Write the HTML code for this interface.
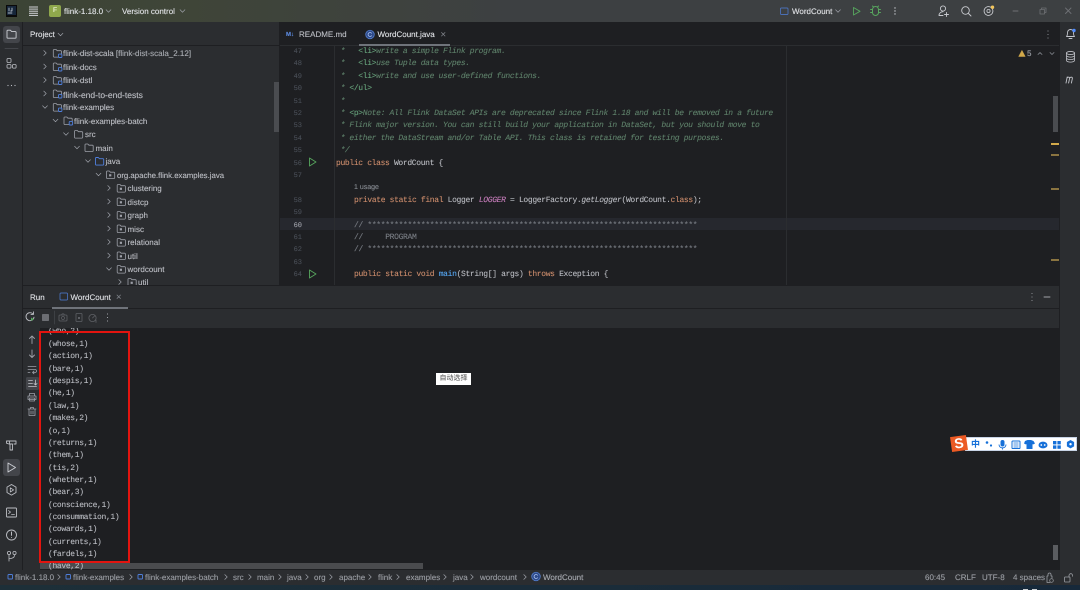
<!DOCTYPE html>
<html>
<head>
<meta charset="utf-8">
<style>
html,body{margin:0;padding:0;background:#1e1f22;}
#r{position:relative;width:1080px;height:590px;overflow:hidden;background:#1e1f22;filter:blur(.3px);text-rendering:geometricPrecision;}
.b{position:absolute;}
.u,.c,.k{position:absolute;white-space:pre;height:12px;line-height:12px;margin-top:1px;}
.u{font:8px/12px "Liberation Sans",sans-serif;color:#bcbec4;-webkit-text-stroke:.12px;}
.c{font:8px/12px "Liberation Mono",monospace;letter-spacing:-.343px;color:#bcbec4;-webkit-text-stroke:.08px;}
.m{color:#5f826b;font-style:italic;}
.g{color:#67a37c;font-style:normal;}
.w{color:#cf8e6d;}
.d{color:#7a7e85;}
.n{left:280px;width:22px;text-align:right;color:#4b5059;font-size:7px;letter-spacing:0;}
.s{color:#a8abb1;}
svg{position:absolute;left:0;top:0;}
</style>
</head>
<body>
<div id="r">
<!-- backgrounds -->
<div class="b" style="left:0;top:0;width:1080px;height:22px;background:linear-gradient(90deg,#3c4435 0,#3f4538 180px,#3d4042 520px,#3d4042 100%);"></div>
<div class="b" style="left:0;top:22px;width:23px;height:548px;background:#2b2d30;border-right:1px solid #1e1f22;box-sizing:border-box;"></div>
<div class="b" style="left:23px;top:22px;width:256px;height:264px;background:#2b2d30;overflow:hidden;"></div>
<div class="b" style="left:23px;top:45px;width:256px;height:1px;background:#1e1f22;"></div>
<div class="b" style="left:279px;top:22px;width:1px;height:264px;background:#1e1f22;"></div>
<div class="b" style="left:280px;top:45px;width:779px;height:1px;background:#2b2d30;"></div>
<div class="b" style="left:1059px;top:22px;width:21px;height:548px;background:#2b2d30;border-left:1px solid #1e1f22;box-sizing:border-box;"></div>
<div class="b" style="left:280px;top:218px;width:779px;height:12.4px;background:#26282e;"></div>
<div class="b" style="left:334px;top:46px;width:1px;height:240px;background:#2b2d30;"></div>
<div class="b" style="left:786px;top:46px;width:1px;height:240px;background:#2b2d30;"></div>
<div class="b" style="left:359px;top:44px;width:91px;height:2px;background:#6f737a;"></div>
<div class="b" style="left:274px;top:82px;width:5px;height:50px;background:#4a4c50;"></div>
<div class="b" style="left:1053px;top:96px;width:5px;height:36px;background:#4a4c50;"></div>
<div class="b" style="left:1051px;top:143px;width:8px;height:1.5px;background:#d2a94a;"></div>
<div class="b" style="left:1051px;top:154px;width:8px;height:2px;background:#8a7440;"></div>
<div class="b" style="left:1051px;top:188px;width:8px;height:2px;background:#8a7440;"></div>
<div class="b" style="left:1051px;top:259px;width:8px;height:2px;background:#8a7440;"></div>

<!-- top bar text -->
<div class="u" style="left:64px;top:4.5px;color:#dfe1e5;">flink-1.18.0</div>
<div class="u" style="left:122px;top:4.5px;color:#dfe1e5;">Version control</div>
<div class="u" style="left:792px;top:4.5px;color:#dfe1e5;">WordCount</div>
<div class="b" style="left:49px;top:5px;width:12px;height:12px;border-radius:2px;background:#8fa84c;color:#dfe8c4;font:bold 7px/12px 'Liberation Sans',sans-serif;text-align:center;">F</div>

<!-- project -->
<div class="u" style="left:30px;top:28px;color:#dfe1e5;">Project</div>
<div class="u" style="left:63px;top:47px;">flink-dist-scala <span class="s">[flink-dist-scala_2.12]</span></div>
<div class="u" style="left:63px;top:60.5px;">flink-docs</div>
<div class="u" style="left:63px;top:74px;">flink-dstl</div>
<div class="u" style="left:63px;top:87.5px;font-size:8.5px;">flink-end-to-end-tests</div>
<div class="u" style="left:63px;top:101px;">flink-examples</div>
<div class="u" style="left:74px;top:114.5px;">flink-examples-batch</div>
<div class="u" style="left:85px;top:128px;">src</div>
<div class="u" style="left:95.5px;top:141.5px;">main</div>
<div class="u" style="left:105.5px;top:155px;">java</div>
<div class="u" style="left:117px;top:168.5px;font-size:7.8px;">org.apache.flink.examples.java</div>
<div class="u" style="left:127.5px;top:182px;">clustering</div>
<div class="u" style="left:127.5px;top:195.5px;">distcp</div>
<div class="u" style="left:127.5px;top:209px;">graph</div>
<div class="u" style="left:127.5px;top:222.5px;">misc</div>
<div class="u" style="left:127.5px;top:236px;">relational</div>
<div class="u" style="left:127.5px;top:249.5px;">util</div>
<div class="u" style="left:127.5px;top:263px;">wordcount</div>
<div class="u" style="left:138px;top:276px;height:9px;overflow:hidden;">util</div>

<!-- editor tabs -->
<div class="u" style="left:286px;top:28px;color:#5a86d8;font-size:6px;font-weight:bold;">M↓</div>
<div class="u" style="left:299px;top:28px;">README.md</div>
<div class="u" style="left:377.5px;top:28px;color:#dfe1e5;">WordCount.java</div>
<div class="u" style="left:1027px;top:47px;color:#9da0a8;">5</div>

<!-- code -->
<div class="c n" style="top:45px;">47</div>
<div class="c m" style="left:336px;top:45px;"> *   <span class="g">&lt;li&gt;</span>write a simple Flink program.</div>
<div class="c n" style="top:57.4px;">48</div>
<div class="c m" style="left:336px;top:57.4px;"> *   <span class="g">&lt;li&gt;</span>use Tuple data types.</div>
<div class="c n" style="top:69.8px;">49</div>
<div class="c m" style="left:336px;top:69.8px;"> *   <span class="g">&lt;li&gt;</span>write and use user-defined functions.</div>
<div class="c n" style="top:82.2px;">50</div>
<div class="c m" style="left:336px;top:82.2px;"> * <span class="g">&lt;/ul&gt;</span></div>
<div class="c n" style="top:94.6px;">51</div>
<div class="c m" style="left:336px;top:94.6px;"> *</div>
<div class="c n" style="top:107px;">52</div>
<div class="c m" style="left:336px;top:107px;"> * <span class="g">&lt;p&gt;</span>Note: All Flink DataSet APIs are deprecated since Flink 1.18 and will be removed in a future</div>
<div class="c n" style="top:119.4px;">53</div>
<div class="c m" style="left:336px;top:119.4px;"> * Flink major version. You can still build your application in DataSet, but you should move to</div>
<div class="c n" style="top:131.8px;">54</div>
<div class="c m" style="left:336px;top:131.8px;"> * either the DataStream and/or Table API. This class is retained for testing purposes.</div>
<div class="c n" style="top:144.2px;">55</div>
<div class="c m" style="left:336px;top:144.2px;"> */</div>
<div class="c n" style="top:156.6px;">56</div>
<div class="c" style="left:336px;top:156.6px;"><span class="w">public class</span> WordCount {</div>
<div class="c n" style="top:169px;">57</div>
<div class="u" style="left:354px;top:181px;font-size:7px;color:#868a91;">1 usage</div>
<div class="c n" style="top:193.8px;">58</div>
<div class="c" style="left:354px;top:193.8px;"><span class="w">private static final</span> Logger <span style="color:#c77dbb;font-style:italic;">LOGGER</span> = LoggerFactory.<i>getLogger</i>(WordCount.<span class="w">class</span>);</div>
<div class="c n" style="top:206.2px;">59</div>
<div class="c n" style="top:218.6px;color:#a1a3ab;">60</div>
<div class="c d" style="left:354px;top:218.6px;">// **************************************************************************</div>
<div class="c n" style="top:231px;">61</div>
<div class="c d" style="left:354px;top:231px;">//     PROGRAM</div>
<div class="c n" style="top:243.4px;">62</div>
<div class="c d" style="left:354px;top:243.4px;">// **************************************************************************</div>
<div class="c n" style="top:255.8px;">63</div>
<div class="c n" style="top:268.2px;">64</div>
<div class="c" style="left:354px;top:268.2px;"><span class="w">public static void</span> <span style="color:#56a8f5;">main</span>(String[] args) <span class="w">throws</span> Exception {</div>

<!-- run panel -->
<div class="b" style="left:23px;top:285px;width:1036px;height:43px;background:#2b2d30;border-top:1px solid #1e1f22;box-sizing:border-box;"></div>
<div class="b" style="left:23px;top:328px;width:17px;height:242px;background:#2b2d30;"></div>
<div class="b" style="left:23px;top:308px;width:1036px;height:1px;background:#1e1f22;"></div>
<div class="b" style="left:52px;top:307px;width:76px;height:2px;background:#6f737a;"></div>
<div class="u" style="left:30px;top:291px;color:#dfe1e5;">Run</div>
<div class="u" style="left:70.5px;top:291px;color:#dfe1e5;">WordCount</div>

<!-- console -->
<div class="b" style="left:40px;top:563px;width:383px;height:6px;background:#4a4b4e;"></div>
<div class="b" style="left:40px;top:328px;width:1019px;height:242px;overflow:hidden;">
<div class="c" style="left:8px;top:-3px;">(who,2)</div>
<div class="c" style="left:8px;top:10px;">(whose,1)</div>
<div class="c" style="left:8px;top:22.4px;">(action,1)</div>
<div class="c" style="left:8px;top:34.7px;">(bare,1)</div>
<div class="c" style="left:8px;top:47.1px;">(despis,1)</div>
<div class="c" style="left:8px;top:59.4px;">(he,1)</div>
<div class="c" style="left:8px;top:71.8px;">(law,1)</div>
<div class="c" style="left:8px;top:84.1px;">(makes,2)</div>
<div class="c" style="left:8px;top:96.5px;">(o,1)</div>
<div class="c" style="left:8px;top:108.8px;">(returns,1)</div>
<div class="c" style="left:8px;top:121.2px;">(them,1)</div>
<div class="c" style="left:8px;top:133.5px;">(tis,2)</div>
<div class="c" style="left:8px;top:145.9px;">(whether,1)</div>
<div class="c" style="left:8px;top:158.2px;">(bear,3)</div>
<div class="c" style="left:8px;top:170.6px;">(conscience,1)</div>
<div class="c" style="left:8px;top:182.9px;">(consummation,1)</div>
<div class="c" style="left:8px;top:195.3px;">(cowards,1)</div>
<div class="c" style="left:8px;top:207.6px;">(currents,1)</div>
<div class="c" style="left:8px;top:220px;">(fardels,1)</div>
<div class="c" style="left:8px;top:232.3px;">(have,2)</div>
</div>
<div class="b" style="left:1053px;top:545px;width:5px;height:15px;background:#5a5c60;"></div>
<div class="b" style="left:39px;top:331px;width:91px;height:232px;border:2px solid #e3140f;box-sizing:border-box;"></div>

<!-- status -->
<div class="b" style="left:0;top:570px;width:1080px;height:15px;background:#2b2d30;"></div>
<div class="b" style="left:0;top:585px;width:1080px;height:5px;background:linear-gradient(90deg,#1d2f38,#17293a);"></div>
<div class="b" style="left:1023px;top:588.5px;width:5px;height:1.5px;background:#c8ccd0;"></div>
<div class="b" style="left:1032px;top:588.5px;width:5px;height:1.5px;background:#c8ccd0;"></div>
<div class="u" style="left:15px;top:570.5px;color:#9a9da3;">flink-1.18.0</div>
<div class="u" style="left:73px;top:570.5px;color:#9a9da3;">flink-examples</div>
<div class="u" style="left:145px;top:570.5px;color:#9a9da3;">flink-examples-batch</div>
<div class="u" style="left:233px;top:570.5px;color:#9a9da3;">src</div>
<div class="u" style="left:257px;top:570.5px;color:#9a9da3;">main</div>
<div class="u" style="left:287px;top:570.5px;color:#9a9da3;">java</div>
<div class="u" style="left:314px;top:570.5px;color:#9a9da3;">org</div>
<div class="u" style="left:339px;top:570.5px;color:#9a9da3;">apache</div>
<div class="u" style="left:378px;top:570.5px;color:#9a9da3;">flink</div>
<div class="u" style="left:406px;top:570.5px;color:#9a9da3;">examples</div>
<div class="u" style="left:453px;top:570.5px;color:#9a9da3;">java</div>
<div class="u" style="left:480px;top:570.5px;color:#9a9da3;">wordcount</div>
<div class="u" style="left:543px;top:570.5px;color:#a8abb1;">WordCount</div>
<div class="u" style="left:925px;top:570.5px;color:#9a9da3;">60:45</div>
<div class="u" style="left:955px;top:570.5px;color:#9a9da3;">CRLF</div>
<div class="u" style="left:982px;top:570.5px;color:#9a9da3;">UTF-8</div>
<div class="u" style="left:1013px;top:570.5px;color:#9a9da3;">4 spaces</div>

<!-- icons -->
<svg width="1080" height="590" viewBox="0 0 1080 590" fill="none" stroke-linecap="round" stroke-linejoin="round">
<defs>
<path id="cr" d="M-1.2-2.4 1.2 0-1.2 2.4" stroke="#9da0a8" stroke-width=".7"/>
<path id="cd" d="M-2.4-1.2 0 1.2 2.4-1.2" stroke="#9da0a8" stroke-width=".7"/>
<path id="fo" d="M0-3a.8.8 0 0 1 .8-.8h2l1.1 1.2h3.5a.8.8 0 0 1 .8.8v4.8a.8.8 0 0 1-.8.8H.8a.8.8 0 0 1-.8-.8z" stroke="#9da0a8" stroke-width=".8"/>
<g id="mo"><use href="#fo"/><rect x="5.2" y="0.8" width="3.4" height="3.4" rx=".6" fill="#2b2d30" stroke="#4f7fdc" stroke-width=".9"/></g>
<g id="pk"><use href="#fo"/><rect x="2.6" y="-.6" width="2.2" height="2.2" fill="#9da0a8"/></g>
<g id="cc"><circle r="4.3" fill="#2d4a8a" stroke="#5a86d8" stroke-width=".7"/><path d="M1.6-1.3A2 2 0 1 0 1.6 1.3" stroke="#a8c0f0" stroke-width=".8"/></g>
</defs>

<!-- title bar -->
<rect x="6" y="5" width="11" height="12" fill="#0a0a0a"/><rect x="7" y="6" width="9" height="9" fill="#16263a"/>
<path d="M9 8v3M12 8v3h-1.4M8 13h4" stroke="#dfe6ee" stroke-width=".7"/>
<g fill="#cfd1d5"><rect x="29" y="6.5" width="9" height="1"/><rect x="29" y="8.6" width="9" height="1"/><rect x="29" y="10.7" width="9" height="1"/><rect x="29" y="12.8" width="9" height="1"/><rect x="29" y="14.9" width="9" height="1"/></g>
<use href="#cd" x="108.5" y="11"/><use href="#cd" x="182.5" y="11"/>
<rect x="780.5" y="8" width="7.5" height="6.5" rx=".8" stroke="#4f7fdc" stroke-width=".7"/>
<use href="#cd" x="838" y="11"/>
<path d="M853.5 7.5v7.5l6.5-3.7z" stroke="#57a65e" stroke-width=".9"/>
<path d="M872.5 9.5a3 3 0 0 1 6 0v3a3 3 0 0 1-6 0zM870.5 9.5h2M878.5 9.5h2M870.5 12.5h2M878.5 12.5h2M873.5 7l-1-1M877.5 7l1-1" stroke="#57a65e" stroke-width="1"/>
<path d="M895 8v0M895 11v0M895 14v0" stroke="#c8cacf" stroke-width="1.4"/>
<circle cx="943" cy="8.5" r="2.6" stroke="#c8cacf" stroke-width=".9"/>
<path d="M939 15.5c0-2.5 2-3.8 4-3.8M946.5 12.5v4M944.5 14.5h4M939 15.5h4" stroke="#c8cacf" stroke-width=".9"/>
<circle cx="965.5" cy="10.5" r="3.8" stroke="#c8cacf" stroke-width=".9"/><path d="M968.5 13.5l2.5 2.5" stroke="#c8cacf" stroke-width=".9"/>
<circle cx="988.5" cy="11" r="4.4" stroke="#c8cacf" stroke-width=".9" stroke-dasharray="2.2 .6"/><circle cx="988.5" cy="11" r="1.6" stroke="#c8cacf" stroke-width=".8"/>
<circle cx="992.5" cy="7.2" r="1.7" fill="#f2c55c"/>
<path d="M1013 11h5" stroke="#6e7074" stroke-width=".9"/>
<path d="M1040 9.5h4.5v4.5H1040zM1041.5 9.5V8h4.5v4.5h-1.5" stroke="#6e7074" stroke-width=".8"/>
<path d="M1065.5 8l5.5 5.5M1071 8l-5.5 5.5" stroke="#6e7074" stroke-width=".9"/>

<!-- left stripe -->
<rect x="3" y="26" width="17" height="17" rx="3" fill="#43454a"/>
<path d="M7 31a.8.8 0 0 1 .8-.8h2.6l1.3 1.4h3.6a.8.8 0 0 1 .8.8v5a.8.8 0 0 1-.8.8H7.8a.8.8 0 0 1-.8-.8z" stroke="#ced0d6" stroke-width=".9"/>
<path d="M5 48.5h13" stroke="#43454a" stroke-width=".9"/>
<rect x="7" y="58.5" width="4" height="4" rx="1" stroke="#bcbec4" stroke-width=".8"/>
<rect x="7" y="64.5" width="4" height="3.6" rx="1" stroke="#bcbec4" stroke-width=".8"/>
<rect x="12.5" y="64.5" width="3.6" height="3.6" rx="1" stroke="#bcbec4" stroke-width=".8"/>
<path d="M8 85.5v0M11.5 85.5v0M15 85.5v0" stroke="#bcbec4" stroke-width="1.2"/>
<path d="M6.5 441h9.5v3h-2M6.5 441v2.2l2.5 .8M9.5 441v3M10 444h2.5v6H10z" stroke="#bcbec4" stroke-width=".9"/>
<rect x="3" y="459" width="17" height="17" rx="3" fill="#43454a"/>
<path d="M8 463v9l7.5-4.5z" stroke="#ced0d6" stroke-width=".9"/>
<path d="M11.5 484.5l4.5 2.6v5.4l-4.5 2.6-4.5-2.6v-5.4z" stroke="#bcbec4" stroke-width=".9"/><path d="M10.3 487.8v4.2l3.3-2.1z" stroke="#bcbec4" stroke-width=".8"/>
<rect x="6.5" y="508" width="10" height="9" rx=".8" stroke="#bcbec4" stroke-width=".9"/><path d="M8.5 510.5l2 1.6-2 1.6M11.5 514.5h3" stroke="#bcbec4" stroke-width=".8"/>
<circle cx="11.5" cy="535" r="5" stroke="#bcbec4" stroke-width=".9"/><path d="M11.5 532v3.4M11.5 537.5v0" stroke="#bcbec4" stroke-width="1"/>
<circle cx="9" cy="553" r="1.6" stroke="#bcbec4" stroke-width=".8"/><circle cx="14.5" cy="553" r="1.6" stroke="#bcbec4" stroke-width=".8"/>
<path d="M9 554.6v6.5M9 558.5c3.5 0 5.5-.8 5.5-3.3" stroke="#bcbec4" stroke-width=".8"/>

<!-- project header + tree -->
<use href="#cd" x="60.5" y="34.5"/>
<use href="#cr" x="45" y="53"/><use href="#mo" x="53.3" y="53.3"/>
<use href="#cr" x="45" y="66.5"/><use href="#mo" x="53.3" y="66.8"/>
<use href="#cr" x="45" y="80"/><use href="#mo" x="53.3" y="80.3"/>
<use href="#cr" x="45" y="93.5"/><use href="#mo" x="53.3" y="93.8"/>
<use href="#cd" x="45" y="107"/><use href="#mo" x="53.3" y="107.3"/>
<use href="#cd" x="55.5" y="120.5"/><use href="#mo" x="64" y="120.8"/>
<use href="#cd" x="66" y="134"/><use href="#fo" x="74.5" y="134.3"/>
<use href="#cd" x="77" y="147.5"/><use href="#fo" x="85" y="147.8"/>
<use href="#cd" x="88" y="161"/><path d="M95.5 158.3a.8.8 0 0 1 .8-.8h2l1.1 1.2h3.5a.8.8 0 0 1 .8.8v4.8a.8.8 0 0 1-.8.8h-6.6a.8.8 0 0 1-.8-.8z" stroke="#4f7fdc" stroke-width=".9"/>
<use href="#cd" x="98.5" y="174.5"/><use href="#pk" x="106.5" y="174.8"/>
<use href="#cr" x="109" y="188"/><use href="#pk" x="117.2" y="188.3"/>
<use href="#cr" x="109" y="201.5"/><use href="#pk" x="117.2" y="201.8"/>
<use href="#cr" x="109" y="215"/><use href="#pk" x="117.2" y="215.3"/>
<use href="#cr" x="109" y="228.5"/><use href="#pk" x="117.2" y="228.8"/>
<use href="#cr" x="109" y="242"/><use href="#pk" x="117.2" y="242.3"/>
<use href="#cr" x="109" y="255.5"/><use href="#pk" x="117.2" y="255.8"/>
<use href="#cd" x="109" y="269"/><use href="#pk" x="117.2" y="269.3"/>
<use href="#cr" x="120" y="282"/><use href="#pk" x="128" y="282.3"/>
<rect x="23" y="285" width="256" height="1" fill="#1e1f22"/>
<rect x="23" y="286" width="256" height="2" fill="#2b2d30"/>

<!-- editor tab icons and gutter -->
<use href="#cc" x="370" y="34.5"/>
<path d="M441.5 32.5l3.5 3.5M445 32.5l-3.5 3.5" stroke="#868a91" stroke-width=".7"/>
<path d="M1048 31v0M1048 34.5v0M1048 38v0" stroke="#a0a2a8" stroke-width="1.1"/>
<path d="M309.5 158v8l6.5-4z" stroke="#57a65e" stroke-width=".9"/>
<path d="M309.5 270v8l6.5-4z" stroke="#57a65e" stroke-width=".9"/>
<path d="M1022 50.5l3.2 6h-6.4z" fill="#d2a94a" stroke="#d2a94a" stroke-width=".5"/>
<path d="M1038 54.5l2-2 2 2M1050 52.5l2 2 2-2" stroke="#868a91" stroke-width=".8"/>

<!-- right stripe -->
<path d="M1066.5 36.5c1-1 1-2 1-4a3 3 0 0 1 6 0c0 2 0 3 1 4zM1069 38.5h3" stroke="#c2c4ca" stroke-width=".9"/><circle cx="1074" cy="30.5" r="1.7" fill="#4f8bff"/>
<ellipse cx="1070.5" cy="53" rx="4" ry="1.6" stroke="#c2c4ca" stroke-width=".9"/>
<path d="M1066.5 53v7.5c0 .9 1.8 1.6 4 1.6s4-.7 4-1.6V53M1066.5 55.5c0 .9 1.8 1.6 4 1.6s4-.7 4-1.6M1066.5 58c0 .9 1.8 1.6 4 1.6s4-.7 4-1.6" stroke="#c2c4ca" stroke-width=".8"/>
<path d="M1066 83l1.2-6M1067 78c1-1.2 2.7-1.2 2.6.3l-1 4.7M1069.8 78c1-1.2 2.7-1.2 2.6.3l-1 4.7" stroke="#c2c4ca" stroke-width=".9"/>

<!-- run panel icons -->
<rect x="60" y="293" width="7.5" height="7" rx=".9" stroke="#4f7fdc" stroke-width=".7"/>
<path d="M117 295l3.5 3.5M120.5 295l-3.5 3.5" stroke="#868a91" stroke-width=".7"/>
<path d="M1032 293.5v0M1032 297v0M1032 300.5v0" stroke="#a0a2a8" stroke-width="1.1"/>
<path d="M1044 297h6" stroke="#a0a2a8" stroke-width=".9"/>
<path d="M33 314a4 4 0 1 0 1 3.2M33.5 311.8v2.6H31" stroke="#bcbec4" stroke-width=".9"/><path d="M31 317.5v3.5l3-1.8z" fill="#57a65e"/>
<rect x="42" y="314" width="7" height="7" rx=".8" fill="#6c6e73"/>
<path d="M54.5 311v13" stroke="#43454a" stroke-width=".8"/>
<rect x="59" y="315" width="8" height="6" rx="1" stroke="#5e6065" stroke-width=".8"/><circle cx="63" cy="318" r="1.5" stroke="#5e6065" stroke-width=".7"/><path d="M61.5 315l.7-1.2h1.6l.7 1.2" stroke="#5e6065" stroke-width=".7"/>
<rect x="76" y="313.5" width="6" height="8" rx=".6" stroke="#5e6065" stroke-width=".8"/><rect x="78" y="317" width="2" height="2" fill="#5e6065"/>
<circle cx="92.5" cy="318" r="3.6" stroke="#5e6065" stroke-width=".8"/><path d="M92.5 318l2-2M96 320v2.5" stroke="#5e6065" stroke-width=".8"/>
<path d="M107.5 314v0M107.5 317.5v0M107.5 321v0" stroke="#bcbec4" stroke-width="1.1"/>
<path d="M32 336v7.5M29.5 338.5l2.5-2.5 2.5 2.5" stroke="#9da0a8" stroke-width=".9"/>
<path d="M32 350v7.5M29.5 355l2.5 2.5 2.5-2.5" stroke="#9da0a8" stroke-width=".9"/>
<path d="M28 366.5h8M28 369.5h7a1.5 1.5 0 0 1 0 3h-2M28 372.5h2M34 371l-1.5 1.5 1.5 1.3" stroke="#9da0a8" stroke-width=".8"/>
<rect x="26" y="377" width="13" height="13" rx="1.5" fill="#43454a"/>
<path d="M28.5 380.5h4M28.5 383.5h4M28.5 386.5h8M35.5 380v4.5M34 383.5l1.5 1.5 1.5-1.5" stroke="#c2c4ca" stroke-width=".8"/>
<path d="M29.5 396v-2.5h5V396M28 396h8v3.5h-8zM29.5 398h5v3h-5z" stroke="#9da0a8" stroke-width=".8"/>
<path d="M28 409h8M30.5 409v-1.5h3v1.5M29 409v6.5h6V409M31 411v3M33 411v3" stroke="#9da0a8" stroke-width=".8"/>

<!-- status icons -->
<rect x="8" y="574.5" width="4.5" height="4.5" rx=".8" stroke="#4f7fdc" stroke-width=".9"/>
<rect x="66" y="574.5" width="4.5" height="4.5" rx=".8" stroke="#4f7fdc" stroke-width=".9"/>
<rect x="138" y="574.5" width="4.5" height="4.5" rx=".8" stroke="#4f7fdc" stroke-width=".9"/>
<use href="#cr" x="59" y="577"/><use href="#cr" x="131" y="577"/><use href="#cr" x="226" y="577"/>
<use href="#cr" x="250" y="577"/><use href="#cr" x="280" y="577"/><use href="#cr" x="307" y="577"/>
<use href="#cr" x="331" y="577"/><use href="#cr" x="370" y="577"/><use href="#cr" x="398" y="577"/>
<use href="#cr" x="445" y="577"/><use href="#cr" x="472" y="577"/><use href="#cr" x="525" y="577"/>
<use href="#cc" x="536" y="576.5"/>
<path d="M1047 582.5v-6.5h1v-1.5a1.5 1.5 0 0 1 3 0v1.5h1v2M1047 582.5h3" stroke="#9a9da3" stroke-width=".8"/><circle cx="1051.5" cy="580.5" r="1.8" stroke="#9a9da3" stroke-width=".7"/>
<rect x="1064.5" y="577" width="5.5" height="5" rx=".6" stroke="#9a9da3" stroke-width=".8"/><path d="M1069 577v-1.5a1.8 1.8 0 0 1 3.6 0v.8" stroke="#9a9da3" stroke-width=".8"/>
</svg>

<!-- popup -->
<div class="b" style="left:436px;top:373px;width:35px;height:12px;background:#fff;color:#444;font:7px/12px 'Liberation Sans','Noto Sans CJK SC',sans-serif;text-align:center;">自动选择</div>

<!-- sogou bar -->
<div class="b" style="left:965px;top:437px;width:112px;height:14px;background:#fff;border:1px solid #c8d4e6;box-sizing:border-box;"></div>
<div class="b" style="left:951px;top:436px;width:16px;height:15px;background:#ec5a24;transform:rotate(-8deg);color:#fff;font:bold 14px/15px 'Liberation Sans',sans-serif;text-align:center;">S</div>
<div class="b" style="left:971px;top:439px;width:10px;height:10px;color:#1670d8;font:bold 9px/10px 'Noto Sans CJK SC',sans-serif;">中</div>
<svg width="1080" height="590" viewBox="0 0 1080 590">
<circle cx="987" cy="442.5" r="1.3" fill="#1670d8"/><circle cx="991" cy="445.5" r="1.1" fill="#1670d8"/>
<rect x="1000.5" y="440" width="4" height="6.5" rx="2" fill="#1670d8"/><path d="M999 444.5c0 4.5 7 4.5 7 0M1002.5 447.5v2" stroke="#1670d8" stroke-width=".9" fill="none"/>
<rect x="1012" y="441" width="8" height="7.5" rx=".8" fill="none" stroke="#1670d8" stroke-width="1"/><path d="M1013.5 443h5M1013.5 445h5M1013.5 447h5" stroke="#1670d8" stroke-width=".7"/>
<path d="M1025 441l2.5-1h3.5l2.5 1 1.5 2.5-2 1-.5-.5v5h-6v-5l-.5.5-2-1z" fill="#1670d8"/>
<ellipse cx="1043" cy="445" rx="4.5" ry="3.4" fill="#1670d8"/><circle cx="1041.3" cy="445" r=".9" fill="#fff"/><circle cx="1044.7" cy="445" r=".9" fill="#fff"/>
<rect x="1053" y="441" width="3.4" height="3.4" fill="#1670d8"/><rect x="1057.4" y="441" width="3.4" height="3.4" fill="#1670d8"/><rect x="1053" y="445.4" width="3.4" height="3.4" fill="#1670d8"/><rect x="1057.4" y="445.4" width="3.4" height="3.4" fill="#1670d8"/>
<path d="M1070.5 440l3.6 2v4.4l-3.6 2-3.6-2V442z" fill="#1670d8"/><circle cx="1070.5" cy="444.2" r="1.2" fill="#fff"/>
</svg>
</div>
</body>
</html>
